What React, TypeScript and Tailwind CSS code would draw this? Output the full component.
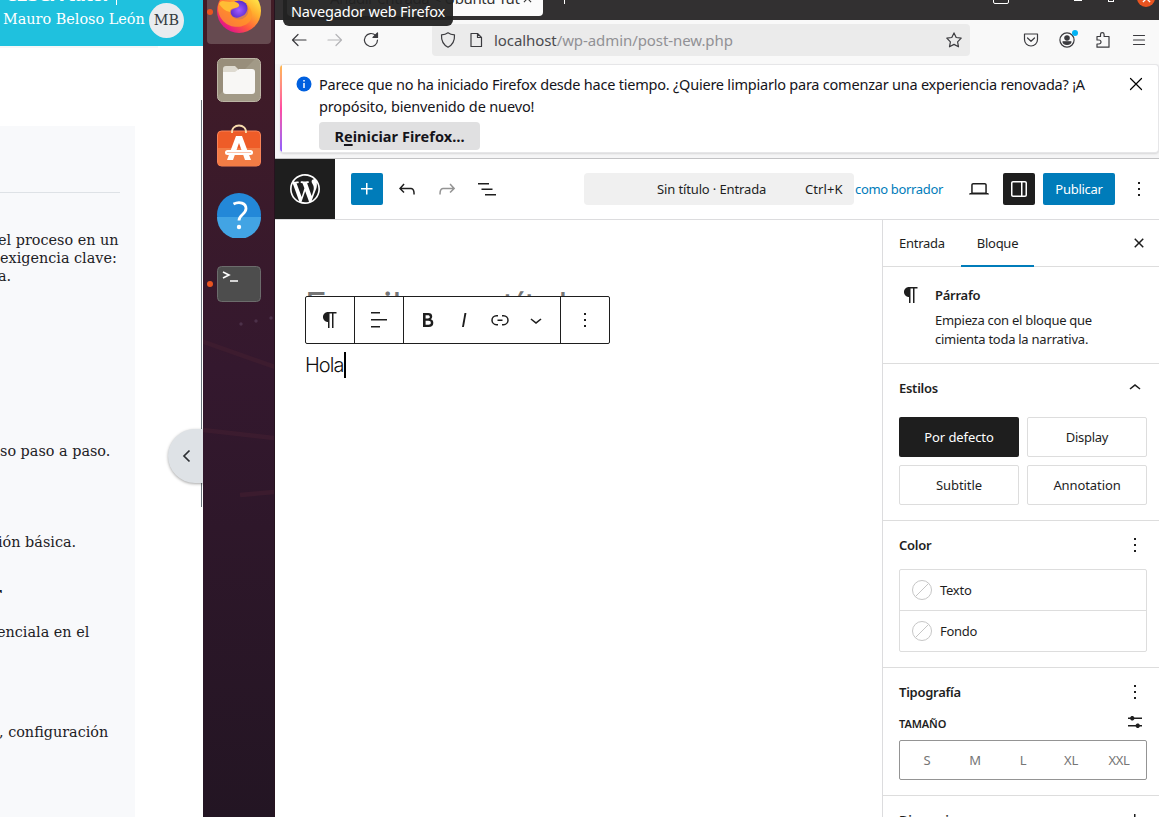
import React from "react";

const P = {
  paragraph: "m9.99609 14v-.2251l.00391.0001v6.225h1.5v-14.5h2.5v14.5h1.5v-14.5h3v-1.5h-8.50391c-2.76142 0-5 2.23858-5 5 0 2.7614 2.23858 5 5 5z",
  align: "M13 5.5H4V4h9v1.5Zm7 7H4V11h16v1.5Zm-7 7H4V18h9v1.5Z",
  bold: "M14.7 11.3c1-.6 1.5-1.6 1.5-3 0-2.3-1.3-3.4-4-3.4H7v14h5.8c1.4 0 2.5-.3 3.3-1 .8-.7 1.2-1.7 1.2-2.9.1-1.9-.8-3.1-2.6-3.7zm-5.1-4h2.3c.6 0 1.1.1 1.4.4.3.3.5.7.5 1.2s-.2 1-.5 1.2c-.3.3-.8.4-1.4.4H9.6V7.3zm4.6 9c-.4.3-1 .4-1.7.4H9.6v-3.9h2.9c.7 0 1.3.2 1.7.5.4.3.6.8.6 1.5s-.2 1.2-.6 1.5z",
  italic: "M12.5 5L10 19h1.9l2.5-14z",
  link: "M10 17.389H8.444A5.194 5.194 0 1 1 8.444 7H10v1.5H8.444a3.694 3.694 0 0 0 0 7.389H10v1.5ZM14 7h1.556a5.194 5.194 0 0 1 0 10.39H14v-1.5h1.556a3.694 3.694 0 0 0 0-7.39H14V7Zm-4.5 6h5v-1.5h-5V13Z",
  down: "M17.5 11.6L12 16l-5.5-4.4.9-1.2L12 14l4.5-3.6 1 1.2z",
  up: "M6.5 12.4L12 8l5.5 4.4-.9 1.2L12 10l-4.5 3.6-1-1.2z",
  more: "M13 19h-2v-2h2v2zm0-6h-2v-2h2v2zm0-6h-2V5h2v2z",
  undo: "M18.3 11.7c-.6-.6-1.4-.9-2.3-.9H6.7l2.9-3.3-1.1-1-4.5 5L8.5 16l1-1-2.7-2.7H16c.5 0 .9.2 1.3.5 1 1 1 3.4 1 4.5v.3h1.5v-.2c0-1.5 0-4.3-1.5-5.7z",
  redo: "M15.6 6.5l-1.1 1 2.9 3.3H8c-.9 0-1.7.3-2.3.9-1.4 1.5-1.4 4.2-1.4 5.6v.2h1.5v-.3c0-1.1 0-3.5 1-4.5.3-.3.7-.5 1.3-.5h9.2L14.5 15l1.1 1.1 4.6-4.6-4.6-5z",
  list: "M3 6h11v1.5H3V6Zm3.5 5.5h11V13h-11v-1.5ZM21 17H10v1.5h11V17Z",
  plus: "M11 12.5V17.5H12.5V12.5H17.5V11H12.5V6H11V11H6V12.5H11Z",
  desktop: "M20.5 16h-.7V8c0-1.1-.9-2-2-2H6.2c-1.1 0-2 .9-2 2v8h-.7c-.8 0-1.5.7-1.5 1.5h20c0-.8-.7-1.5-1.5-1.5zM5.7 8c0-.3.2-.5.5-.5h11.6c.3 0 .5.2.5.5v7.6H5.7V8z",
  drawer: "M18 4H6c-1.1 0-2 .9-2 2v12c0 1.1.9 2 2 2h12c1.1 0 2-.9 2-2V6c0-1.1-.9-2-2-2zm-4 14.5H6c-.3 0-.5-.2-.5-.5V6c0-.3.2-.5.5-.5h8v13zm4.5-.5c0 .3-.2.5-.5.5h-2.5v-13H18c.3 0 .5.2.5.5v12z",
  close: "M12 13.06l3.712 3.713 1.061-1.06L13.061 12l3.712-3.712-1.06-1.06L12 10.938 8.288 7.227l-1.061 1.06L10.939 12l-3.712 3.712 1.06 1.061L12 13.061z",
  settings: "m19 7.5h-7.628c-.3089-.87389-1.1423-1.5-2.122-1.5-.97966 0-1.81309.62611-2.12197 1.5h-2.12803v1.5h2.12803c.30888.87389 1.14231 1.5 2.12197 1.5.9797 0 1.8131-.62611 2.122-1.5h7.628zM19 15h-2.128c-.3089-.8739-1.1423-1.5-2.122-1.5s-1.8131.6261-2.122 1.5h-7.628v1.5h7.628c.3089.8739 1.1423 1.5 2.122 1.5s1.8131-.6261 2.122-1.5h2.128z",
  wp: "M20 10c0-5.51-4.49-10-10-10C4.48 0 0 4.49 0 10c0 5.52 4.48 10 10 10 5.51 0 10-4.48 10-10zM7.78 15.37L4.37 6.22c.55-.02 1.17-.08 1.17-.08.5-.06.44-1.13-.06-1.11 0 0-1.45.11-2.37.11-.18 0-.37 0-.58-.01C4.12 2.69 6.87 1.11 10 1.11c2.33 0 4.45.87 6.05 2.34-.68-.11-1.65.39-1.65 1.58 0 .74.45 1.36.9 2.1.35.61.55 1.36.55 2.46 0 1.49-1.4 5-1.4 5l-3.03-8.37c.54-.02.82-.17.82-.17.5-.05.44-1.25-.06-1.22 0 0-1.44.12-2.38.12-.87 0-2.33-.12-2.33-.12-.5-.03-.56 1.2-.06 1.22l.92.08 1.26 3.41zM17.41 10c.24-.64.74-1.87.43-4.25.7 1.29 1.05 2.71 1.05 4.25 0 3.29-1.73 6.24-4.4 7.78.97-2.59 1.94-5.2 2.92-7.78zM6.1 18.09C3.12 16.65 1.11 13.53 1.11 10c0-1.3.23-2.48.72-3.59C3.25 10.3 4.67 14.2 6.1 18.09zm4.03-6.63l2.58 6.98c-.86.29-1.76.45-2.71.45-.79 0-1.57-.11-2.29-.33.81-2.38 1.62-4.74 2.42-7.1z",
};

function Icon({ d, className = "" }: { d: string; className?: string }) {
  return (
    <svg viewBox="0 0 24 24" className={"size-6 shrink-0 fill-current " + className}>
      <path d={d} />
    </svg>
  );
}

function Line({ children, className = "" }: { children: React.ReactNode; className?: string }) {
  return (
    <svg viewBox="0 0 16 16" fill="none" stroke="currentColor" strokeWidth="1.2" strokeLinecap="round" strokeLinejoin="round" className={"size-4 shrink-0 " + className}>
      {children}
    </svg>
  );
}

function CoursePage() {
  return (
    <section className="relative flex h-full w-[203px] shrink-0 flex-col overflow-hidden bg-white font-['DejaVu_Serif',serif] text-[14.4px] text-[#1d2125]">
      <header className="relative h-[46px] shrink-0 overflow-hidden bg-[#1fc1de] text-white">
        <div className="absolute -top-[15px] left-[5px] font-['DejaVu_Sans',sans-serif] text-[17px] leading-5 font-bold tracking-[-1.2px] whitespace-nowrap">CESGA tutor</div>
        <div className="absolute top-0 left-[116px] h-[5px] w-px bg-white" />
        <div className="flex h-full items-start pl-[3px]">
          <span className="w-[146px] pt-[9px] leading-5 whitespace-nowrap">Mauro Beloso León</span>
          <span className="mt-[3px] flex size-[35px] items-center justify-center rounded-full bg-[#e9ecef] text-[14.4px] text-[#343a40]">MB</span>
        </div>
      </header>
      <div className="h-[2px] w-[158px] shrink-0 bg-[#f6f7f7]" />
      <article className="mt-[78px] flex w-[135px] grow flex-col overflow-hidden bg-[#f8f9fb] whitespace-nowrap leading-[18px]">
        <div className="mt-[66px] h-px w-[120px] shrink-0 bg-[#dee2e6]" />
        <div className="mt-[38px] flex w-[120px] flex-col items-start">
          <span className="-ml-[2px]">el proceso en un</span>
          <span>exigencia clave:</span>
          <span className="-ml-[2px]">a.</span>
        </div>
        <p className="mt-[157px]">so paso a paso.</p>
        <p className="mt-[73px] -ml-[2px]">ión básica.</p>
        <h3 className="-ml-[8px] mt-[34px] h-[18px] text-[18px] font-bold">r</h3>
        <p className="mt-[20px] -ml-[3px]">enciala en el</p>
        <p className="mt-[82px] -ml-px">, configuración</p>
      </article>
      <div className="absolute top-[100px] right-[1px] h-[407px] w-px bg-[#6a737b]" />
      <button className="absolute top-[429px] left-[168px] flex h-[54px] w-[60px] items-center rounded-full bg-[#dee2e6] pl-[12px] shadow-[0_1px_3px_rgba(0,0,0,0.35)]">
        <svg viewBox="0 0 14 14" className="size-[14px]" fill="none" stroke="#2b2f33" strokeWidth="1.7"><path d="M9.5 1.5 4 7l5.500 5.500" /></svg>
      </button>
    </section>
  );
}

function Dock() {
  return (
    <aside className="relative flex h-full w-[72px] shrink-0 flex-col items-center overflow-hidden border-r border-[#26131f] bg-linear-to-b from-[#421c26] via-[#34182e] via-45% to-[#231523]">
      <svg className="absolute top-[300px] left-0 h-[220px] w-[72px]" viewBox="0 0 72 220" fill="none">
        <g fill="#4c3149"><circle cx="38" cy="24" r="1.700" /><circle cx="53" cy="21" r="1.700" /><circle cx="68" cy="18" r="1.700" /></g>
        <g stroke="#431f31" strokeWidth="4.500" opacity=".6"><path d="M-2 41 72 67" /><path d="m0 130 72 8" /><path d="m37 195 35-3" /></g>
      </svg>
      <div className="relative -mt-5 flex h-16 w-16 shrink-0 items-center justify-center rounded bg-[#664a50]">
        <svg viewBox="0 0 48 48" className="mb-[2px] size-[48px]">
          <defs>
            <linearGradient id="fox" x1="1" y1="0.2" x2=".35" y2="1"><stop stopColor="#fff44f" /><stop offset=".35" stopColor="#ffb02e" /><stop offset=".7" stopColor="#ff5a3c" /><stop offset="1" stopColor="#e31587" /></linearGradient>
            <radialGradient id="globe"><stop stopColor="#a35cff" /><stop offset="1" stopColor="#592acb" /></radialGradient>
          </defs>
          <circle cx="24" cy="24" r="22" fill="url(#fox)" />
          <circle cx="24" cy="23" r="9.500" fill="url(#globe)" />
          <path d="M3 19C6 11 10 16 15 16c5-1 10 0 9 3-2 3-7 2-8 5-1 5 4 8 9 6 7-2 9-8 6-14 8 7 8 18-1 22-12 6-28-3-27-19z" fill="#ff9a28" opacity=".75" />
          <path d="M4 17c2-5 6-2 11-2 5-1 10 1 9 4-3 3-9 1-9 6-5-1-8-4-11-8z" fill="#ffbd35" />
        </svg>
      </div>
      <svg viewBox="0 0 46 46" className="mt-[13px] size-[46px] shrink-0">
        <rect x="1.500" y="1.500" width="43" height="43" rx="5" fill="#a29a87" stroke="#bcb5a5" />
        <path d="M2 39 39 2H6a4 4 0 0 0-4 4z" fill="#918773" opacity=".6" />
        <path d="M7 12q0-3 3-3h9l3 3v8H7z" fill="#dedad0" />
        <path d="M7 15h12l4-3h13q3 0 3 3v19q0 3-3 3H10q-3 0-3-3z" fill="#f8f7f5" />
      </svg>
      <svg viewBox="0 0 46 46" className="mt-[20px] size-[46px] shrink-0">
        <rect x="1.500" y="8" width="43" height="35" rx="4" fill="#ee5c28" stroke="#f98358" />
        <path d="M2 25h42v14a4 4 0 0 1-4 4H6a4 4 0 0 1-4-4z" fill="#f27c45" />
        <path d="M16 10c-1-10 15-10 14 0" fill="none" stroke="#f9dcae" strokeWidth="1.800" />
        <g fill="#fff"><path d="M20 13h6l9 24h-6l-6-17-6 17h-6z" /><rect x="9" y="27" width="28" height="5" rx="2.500" /></g>
        <path d="M11 29.500h24" stroke="#f9c2aa" />
      </svg>
      <svg viewBox="0 0 46 46" className="mt-[23px] size-[46px] shrink-0">
        <circle cx="23" cy="23" r="22" fill="#2388d8" />
        <path d="M1 25a22 22 0 0 0 44 0z" fill="#42a4e4" />
        <path d="M17.500 12c6-3 12.500-1 12.500 4.500 0 6-7 6-7 12" fill="none" stroke="#fff" strokeWidth="2.800" />
        <circle cx="23" cy="35" r="2.200" fill="#fff" />
      </svg>
      <svg viewBox="0 0 46 38" className="mt-[26px] h-[38px] w-[46px] shrink-0">
        <rect x="1.500" y="2.500" width="43" height="35" rx="4" fill="#4d4d4d" stroke="#6c6c6c" />
        <path d="m7 8 6 3-6 3M14 17h8" fill="none" stroke="#fff" strokeWidth="1.600" />
      </svg>
      <i className="absolute top-[9px] left-1 size-[6px] rounded-full bg-[#e95420]" />
      <i className="absolute top-[281px] left-1 size-[6px] rounded-full bg-[#e95420]" />
    </aside>
  );
}

function Browser() {
  return (
    <>
      <div className="relative h-5 shrink-0 overflow-hidden bg-[#323031]">
        <div className="absolute -top-5 left-[12px] h-9 w-[256px] rounded bg-[#fbfbfb]">
          <span className="absolute top-[8px] left-[43px] text-[15px] leading-5 tracking-[-0.45px] whitespace-nowrap text-[#333]">Añadir entrada &lt; Ubuntu Tut</span>
          <svg viewBox="0 0 10 10" className="absolute top-[14px] left-[236px] size-[9px]" stroke="#333" strokeWidth="1.200"><path d="m1 1 8 8M9 1 1 9" /></svg>
        </div>
        <span className="absolute top-0 left-[289px] h-[4px] w-px bg-white" />
        <span className="absolute -top-3 left-[718px] h-4 w-4 rounded-[2px] border border-white" />
        <span className="absolute top-0 left-[799px] h-px w-2 bg-white" />
        <span className="absolute -top-3 left-[833px] h-[14px] w-[6px] border border-white" />
        <span className="absolute -top-[11px] left-[862px] flex size-[18px] items-end justify-center rounded-full bg-[#e95420] text-white">
          <svg viewBox="0 0 10 10" className="mb-[4px] size-[9px]" stroke="currentColor" strokeWidth="1.500"><path d="m1 1 8 8M9 1 1 9" /></svg>
        </span>
      </div>
      <nav className="flex h-[44px] shrink-0 items-center bg-[#f9f9f9] pb-[4px] text-[#3b3b3f]">
        <Line className="ml-4"><path d="M15 8H1.500M7 2.500 1.500 8 7 13.500" /></Line>
        <Line className="ml-5 text-[#b5b5b8]"><path d="M1 8h13.500M9 2.500 14.500 8 9 13.500" /></Line>
        <Line className="ml-5"><path d="M14.500 8A6.500 6.500 0 1 1 12.600 3.400L14.500 5.300" /><path d="M14.500 1v4.500H10z" fill="currentColor" /></Line>
        <div className="ml-[53px] flex h-8 w-[538px] items-center rounded bg-[#ebebeb] pl-2">
          <Line><path d="M8 .8c2 1.600 4 2 6.500 2C14.800 8.500 12.500 13 8 15.200 3.500 13 1.200 8.500 1.500 2.800 4 2.800 6 2.400 8 .8z" /></Line>
          <Line className="ml-3"><path d="M3 1.500h6.500L13.500 5.500v9H3zM9.500 1.500v4h4" /></Line>
          <span className="ml-[10px] pt-px text-[15px] tracking-[-0.08px] whitespace-nowrap text-[#919195]"><span className="text-[#4a4a4f]">localhost</span>/wp-admin/post-new.php</span>
          <Line className="mr-2 ml-auto"><path d="m8 .9 2.200 4.600 5 .7-3.600 3.600.9 5L8 12.400l-4.500 2.400.9-5L.8 6.200l5-.7z" /></Line>
        </div>
        <Line className="ml-[53px]"><path d="M1.500 2h13v5.500a6.500 6.500 0 0 1-13 0zM4.500 6 8 9.300 11.500 6" /></Line>
        <div className="relative ml-[20px] size-4">
          <Line><circle cx="8" cy="8" r="7.100" /><circle cx="8" cy="6" r="2.200" fill="currentColor" /><path d="M4 9.800h8c-.7 3.400-7.300 3.400-8 0z" fill="currentColor" /></Line>
          <i className="absolute -top-[2px] -right-[3px] size-[6px] rounded-full bg-[#00b3f4]" />
        </div>
        <Line className="ml-[20px]"><path d="M2 7V4.500h3.500V2.500a1.800 1.800 0 0 1 3.600 0v2H14v10.700H2V12h2a2 2 0 0 0 0-4H2z" /></Line>
        <Line className="ml-[20px]"><path d="M2.500 3.500h11M2.500 8h11M2.500 12.500h11" /></Line>
      </nav>
      <div className="flex h-[95px] shrink-0 border-b border-[#c2c2c4] bg-[#f5f5f6] pb-[5px] pl-[5px]">
        <div className="flex w-[879px] overflow-hidden rounded border border-l-0 border-[#e6e6e8] bg-white shadow-[0_1px_2px_rgba(0,0,0,0.12)]">
          <div className="w-[2px] bg-linear-to-b from-[#ffb84d] via-[#ff4aa2] to-[#8d5cff]" />
          <div className="flex w-full pt-[8px] pl-[14px]">
            <svg viewBox="0 0 16 16" className="mt-[3px] size-4 shrink-0"><circle cx="8" cy="8" r="7.500" fill="#0060df" /><path d="M8 7v5M8 4v1.500" stroke="#fff" strokeWidth="1.500" /></svg>
            <div className="ml-[7px] w-[790px]">
              <p className="text-[14.500px] leading-[22px] tracking-[-0.22px] whitespace-nowrap text-[#15141a]">
                Parece que no ha iniciado Firefox desde hace tiempo. ¿Quiere limpiarlo para comenzar una experiencia renovada? ¡A<br /><span className="tracking-[-0.14px]">propósito, bienvenido de nuevo!</span>
              </p>
              <button className="mt-[5px] flex h-7 w-[161px] items-center justify-center rounded bg-[#e0e0e1] pt-px text-[14.500px] font-bold tracking-[0.05px] text-[#15141a]"><span>R<u className="decoration-2 underline-offset-2">e</u>iniciar Firefox…</span></button>
            </div>
            <Line className="mt-[3px] ml-[19px]"><path d="M2.500 2.500 13.500 13.500M13.500 2.500 2.500 13.500" /></Line>
          </div>
        </div>
      </div>
    </>
  );
}

function EditorBar() {
  return (
    <header className="flex h-[61px] shrink-0 items-center border-b border-[#dcdcde] bg-white text-[#1e1e1e]">
      <div className="flex h-[60px] w-[60px] shrink-0 items-center justify-center bg-[#1e1e1e] text-white">
        <svg viewBox="-2 -2 24 24" className="size-9 fill-current"><path d={P.wp} /></svg>
      </div>
      <button className="ml-4 flex size-8 items-center justify-center rounded-[2px] bg-[#007cba] text-white"><Icon d={P.plus} /></button>
      <Icon d={P.undo} className="ml-[12px]" />
      <Icon d={P.redo} className="ml-4 text-[#949494]" />
      <Icon d={P.list} className="ml-4" />
      <div className="ml-[85px] flex h-8 w-[270px] shrink-0 items-center rounded bg-[#f0f0f0] pt-[2px]">
        <span className="ml-[73px] w-[148px] tracking-[-0.13px] whitespace-nowrap">Sin título · Entrada</span>
        <span className="tracking-[0.1px] whitespace-nowrap">Ctrl+K</span>
      </div>
      <span className="ml-px w-[89px] shrink-0 pt-[2px] tracking-[-0.33px] whitespace-nowrap text-[#007cba]">como borrador</span>
      <Icon d={P.desktop} className="ml-[23px]" />
      <button className="ml-3 flex size-8 shrink-0 items-center justify-center rounded-[2px] bg-[#1e1e1e] text-white"><Icon d={P.drawer} /></button>
      <button className="ml-2 flex h-8 w-[72px] shrink-0 items-center justify-center rounded-[2px] bg-[#007cba] pt-[2px] text-white">Publicar</button>
      <Icon d={P.more} className="ml-3" />
    </header>
  );
}

function Canvas() {
  return (
    <main className="relative flex grow flex-col bg-white pl-[30px] font-['Inter',sans-serif]">
      <h1 className="mt-[62px] h-[62px] text-[36.500px] leading-[48px] font-normal tracking-[0.45px] whitespace-nowrap text-[#757575]">Escribe un título</h1>
      <p className="mt-[8px] flex h-[26px] items-center text-[20px] font-light tracking-[-0.95px] text-[#111]">Hola<span className="ml-[0.5px] h-[26px] w-[2px] bg-black" /></p>
      <div className="absolute top-[76px] left-[30px] flex h-12 w-[305px] divide-x divide-[#1e1e1e] rounded-[2px] border border-[#1e1e1e] bg-white text-[#1e1e1e]">
        <div className="flex w-[49px] items-center justify-center"><Icon d={P.paragraph} /></div>
        <div className="flex w-[49px] items-center justify-center"><Icon d={P.align} /></div>
        <div className="flex w-[157px] items-center gap-3 pl-3"><Icon d={P.bold} /><Icon d={P.italic} /><Icon d={P.link} /><Icon d={P.down} /></div>
        <div className="flex grow items-center justify-center"><Icon d={P.more} /></div>
      </div>
    </main>
  );
}

function ColorRow({ label, last }: { label: string; last?: boolean }) {
  return (
    <div className={"flex items-center gap-2 pl-3 " + (last ? "h-10" : "h-[41px] border-b border-[#ddd]")}>
      <svg viewBox="0 0 20 20" className="size-5" fill="none" stroke="#c6c6c6"><circle cx="10" cy="10" r="9.500" /><path d="m3.500 16.500 13-13" /></svg>
      <span className="pt-px">{label}</span>
    </div>
  );
}

function Sidebar() {
  const styleCls = "flex h-10 items-center justify-center rounded-[2px] pt-px ";
  return (
    <aside className="flex w-[277px] shrink-0 flex-col overflow-hidden border-l border-[#dcdcde] bg-white text-[#1e1e1e]">
      <div className="flex h-[47px] shrink-0 items-center border-b border-[#ddd]">
        <span className="w-[78px] pt-px pl-4">Entrada</span>
        <span className="-mb-px flex h-[47px] w-[73px] items-center justify-center border-b-2 border-[#007cba] pt-[2px]">Bloque</span>
        <Icon d={P.close} className="ml-[93px]" />
      </div>
      <div className="flex h-[97px] shrink-0 border-b border-[#ddd] pt-4 pl-4">
        <Icon d={P.paragraph} />
        <div className="ml-3">
          <h2 className="h-6 leading-6 font-semibold">Párrafo</h2>
          <p className="mt-1 leading-[19px] whitespace-nowrap">Empieza con el bloque que<br />cimienta toda la <span className="tracking-[-0.18px]">narrativa.</span></p>
        </div>
      </div>
      <section className="h-[157px] shrink-0 border-b border-[#ddd] px-4">
        <div className="flex h-[53px] items-center justify-between pb-[4px]"><h2 className="font-semibold">Estilos</h2><Icon d={P.up} className="-mt-[2px] -mr-1" /></div>
        <div className="grid w-[248px] grid-cols-2 gap-2">
          <span className={styleCls + "bg-[#1e1e1e] tracking-[-0.1px] text-white"}>Por defecto</span>
          <span className={styleCls + "border border-[#ddd]"}>Display</span>
          <span className={styleCls + "border border-[#ddd] tracking-[-0.05px]"}>Subtitle</span>
          <span className={styleCls + "border border-[#ddd] tracking-[-0.1px]"}>Annotation</span>
        </div>
      </section>
      <section className="h-[147px] shrink-0 border-b border-[#ddd] px-4">
        <div className="flex h-12 items-center justify-between"><h2 className="pt-px font-semibold">Color</h2><Icon d={P.more} className="-mr-1" /></div>
        <div className="w-[248px] rounded-[2px] border border-[#ddd]"><ColorRow label="Texto" /><ColorRow label="Fondo" last /></div>
      </section>
      <section className="h-[128px] shrink-0 border-b border-[#ddd] px-4">
        <div className="flex h-12 items-center justify-between"><h2 className="pt-px font-semibold">Tipografía</h2><Icon d={P.more} className="-mr-1" /></div>
        <div className="-mt-[6px] flex h-[30px] items-start justify-between"><h3 className="pt-[6px] text-[11px] leading-4 font-semibold tracking-[-0.1px]">TAMAÑO</h3><Icon d={P.settings} className="-mr-1" /></div>
        <div className="grid h-10 w-[248px] grid-cols-5 items-center rounded-[2px] border border-[#949494] px-[3px] pt-px text-center text-[#757575]">
          <span>S</span><span>M</span><span>L</span><span>XL</span><span>XXL</span>
        </div>
      </section>
      <section className="flex h-12 shrink-0 items-center justify-between px-4"><h2 className="pt-px font-semibold">Dimensiones</h2><Icon d={P.plus} className="-mr-1" /></section>
    </aside>
  );
}

export default function App() {
  return (
    <div className="relative flex h-[817px] w-[1159px] overflow-hidden bg-white">
      <CoursePage />
      <Dock />
      <div className="flex w-[884px] shrink-0 flex-col font-['Noto_Sans',sans-serif] text-[13px] tracking-[-0.27px]">
        <Browser />
        <EditorBar />
        <div className="flex min-h-0 grow">
          <Canvas />
          <Sidebar />
        </div>
      </div>
      <div className="absolute -top-2 left-[283px] flex h-[34px] w-[170px] items-end justify-center rounded-md bg-[#222]/95 pb-[5px] font-['Noto_Sans',sans-serif] text-[14.5px] leading-5 tracking-[-0.17px] whitespace-nowrap text-white">Navegador web Firefox</div>
    </div>
  );
}
